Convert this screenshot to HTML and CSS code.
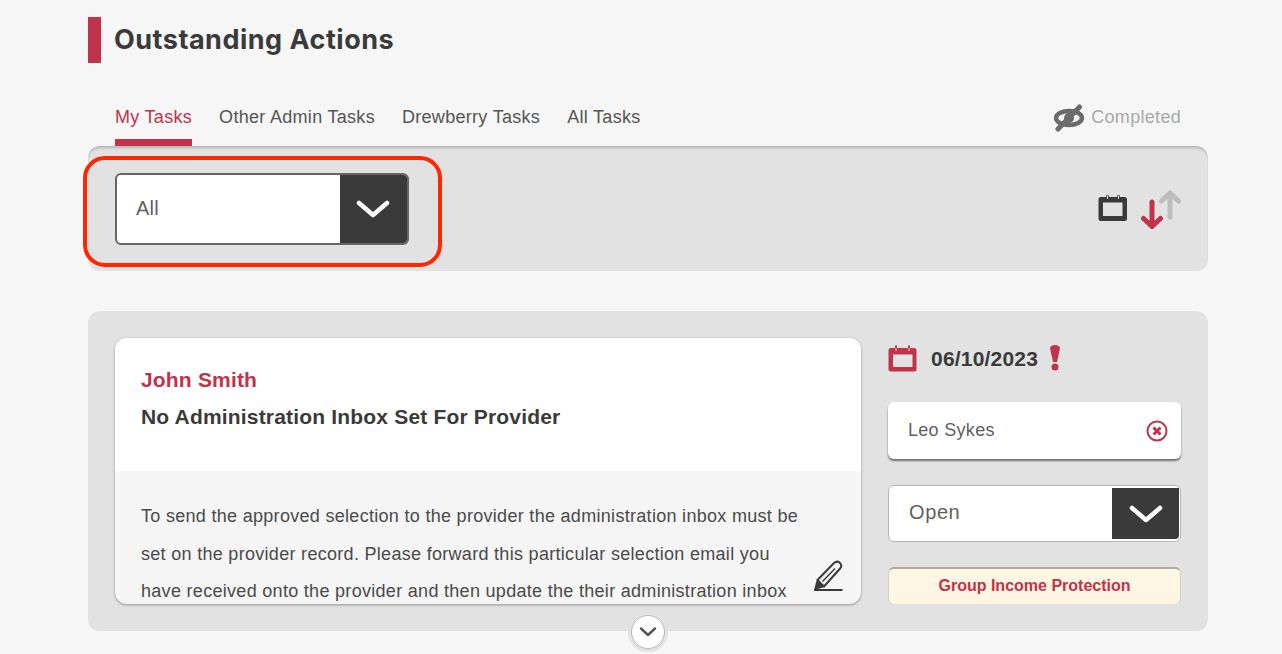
FILE: index.html
```html
<!DOCTYPE html>
<html lang="en">
<head>
    <meta charset="UTF-8">
    <meta name="viewport" content="width=device-width, initial-scale=1.0">
    <title>Outstanding Actions</title>
    <link rel="stylesheet" href="styles.css">
</head>
<body>
    <div class="container">
        <header class="page-title">
            <span class="title-bar"></span>
            <h1>Outstanding Actions</h1>
        </header>

        <nav class="tabs">
            <a class="tab active">My Tasks</a>
            <a class="tab">Other Admin Tasks</a>
            <a class="tab">Drewberry Tasks</a>
            <a class="tab">All Tasks</a>
            <div class="completed">
                <svg class="eye-icon" width="32" height="28" viewBox="0 0 32 28">
                    <ellipse cx="16" cy="14" rx="13" ry="7" fill="none" stroke="#6b6b6b" stroke-width="4.400"/>
                    <circle cx="16" cy="14" r="5" fill="#6b6b6b"/>
                    <path d="M5 25L26.500 3" stroke="#6b6b6b" stroke-width="5" stroke-linecap="round"/>
                </svg>
                <span>Completed</span>
            </div>
        </nav>

        <section class="filter-panel">
            <div class="select select-large">
                <span class="select-value">All</span>
                <span class="select-arrow">
                    <svg width="34" height="20" viewBox="0 0 34 20"><path d="M3 4L17 16L31 4" fill="none" stroke="#fff" stroke-width="4.500" stroke-linecap="round" stroke-linejoin="round"/></svg>
                </span>
            </div>
            <div class="sort-icons">
                <svg class="calendar" width="30" height="26" viewBox="0 0 30 26">
                    <path d="M3 2H26.500A2.500 2.500 0 0 1 29 4.500V23.500A2.500 2.500 0 0 1 26.500 26H3A2.500 2.500 0 0 1 .5 23.500V4.500A2.500 2.500 0 0 1 3 2ZM5 7.500V21H24.500V7.500Z" fill="#3a3a3a" fill-rule="evenodd"/>
                    <path d="M9.500 0V5M20.500 0V5" stroke="#3a3a3a" stroke-width="2.400"/>
                    <path d="M9.500 .5V4M20.500 .5V4" stroke="#e2e2e2" stroke-width="1"/>
                </svg>
                <svg class="arrows" width="40" height="42" viewBox="0 0 40 42">
                    <path d="M29 28V4M20.500 12L29 4L37.500 12" fill="none" stroke="#bdbdbd" stroke-width="5" stroke-linecap="round" stroke-linejoin="round"/>
                    <path d="M11 13V37.500M2.500 29.500L11 37.500L19.500 29.500" fill="none" stroke="#c1334a" stroke-width="5" stroke-linecap="round" stroke-linejoin="round"/>
                </svg>
            </div>
            <div class="highlight-ring"></div>
        </section>

        <section class="task-panel">
            <article class="task-card">
                <div class="task-head">
                    <h2>John Smith</h2>
                    <h3>No Administration Inbox Set For Provider</h3>
                </div>
                <div class="task-body">
                    <p>To send the approved selection to the provider the administration inbox must be set on the provider record. Please forward this particular selection email you have received onto the provider and then update the their administration inbox</p>
                    <svg class="edit-icon" width="30" height="32" viewBox="0 0 30 32">
                        <path d="M1 31H29.500" stroke="#3a3a3a" stroke-width="2"/>
                        <path d="M1 31L4 20L12 28Z" fill="#3a3a3a"/>
                        <path d="M4.500 21L21 4Q24 1.500 26.500 3.500Q29.500 6 27.500 9L11 27.500Z" fill="none" stroke="#3a3a3a" stroke-width="2" stroke-linejoin="round"/>
                        <path d="M9.500 22.500L22 9.500" fill="none" stroke="#3a3a3a" stroke-width="1.400"/>
                    </svg>
                </div>
            </article>

            <aside class="task-side">
                <div class="due-date">
                    <svg width="30" height="27" viewBox="0 0 30 27">
                        <path d="M3 3H26A2.500 2.500 0 0 1 28.500 5.500V24.500A2 2 0 0 1 26.500 26.500H3A2.500 2.500 0 0 1 .5 24.500V5.500A2.500 2.500 0 0 1 3 3ZM5 9.500V22H24.500V9.500Z" fill="#c1334a" fill-rule="evenodd"/>
                        <path d="M8 .5V6M21 .5V6" stroke="#c1334a" stroke-width="2"/>
                        <path d="M8 3V6M21 3V6" stroke="#e2e2e2" stroke-width="1"/>
                    </svg>
                    <span class="date-text">06/10/2023</span>
                    <svg class="alert" width="12" height="26" viewBox="0 0 12 26">
                        <path d="M1 3A5 3 0 0 1 11 3L8 17H4Z" fill="#c1334a"/>
                        <circle cx="6" cy="22" r="3.500" fill="#c1334a"/>
                    </svg>
                </div>
                <div class="assignee">
                    <span>Leo Sykes</span>
                    <svg width="22" height="22" viewBox="0 0 22 22">
                        <circle cx="11" cy="11" r="9.500" fill="none" stroke="#c1334a" stroke-width="2"/>
                        <path d="M7.500 7.500L14.500 14.500M14.500 7.500L7.500 14.500" stroke="#c1334a" stroke-width="3"/>
                    </svg>
                </div>
                <div class="select select-small">
                    <span class="select-value">Open</span>
                    <span class="select-arrow">
                        <svg width="34" height="20" viewBox="0 0 34 20"><path d="M3 4L17 16L31 4" fill="none" stroke="#fff" stroke-width="4.500" stroke-linecap="round" stroke-linejoin="round"/></svg>
                    </span>
                </div>
                <div class="product-tag">Group Income Protection</div>
            </aside>

            <button class="expand-btn">
                <svg width="18" height="10" viewBox="0 0 18 10"><path d="M2 1.500L9 8L16 1.500" fill="none" stroke="#555" stroke-width="2.400" stroke-linecap="round" stroke-linejoin="round"/></svg>
            </button>
        </section>
    </div>
</body>
</html>
```

FILE: styles.css
```css
html, body {
    height: 100%;
}
body {
    font-family: "Liberation Sans", Arial, sans-serif;
    margin: 0;
    background-color: #f6f6f6;
    color: #3a3a3a;
    overflow: hidden;
}
.container {
    width: 1120px;
    margin-left: 88px;
    padding-top: 17px;
}
.page-title {
    display: flex;
    align-items: center;
    gap: 13px;
    height: 46px;
}
.title-bar {
    width: 13px;
    height: 46px;
    background: #c1334a;
}
h1 {
    margin: 0 0 2px;
    font-family: Inter, sans-serif;
    font-size: 27px;
    font-weight: 700;
    letter-spacing: 0.5px;
    color: #3a3a3a;
}
.tabs {
    display: flex;
    gap: 27px;
    height: 83px;
    padding: 0 27px;
    box-sizing: border-box;
    align-items: flex-end;
}
.tab {
    height: 40px;
    font-size: 18px;
    line-height: 22px;
    letter-spacing: 0.3px;
    color: #555;
    box-sizing: border-box;
}
.tab.active {
    color: #c1334a;
    border-bottom: 7px solid #c1334a;
}
.completed {
    display: flex;
    align-items: center;
    gap: 6px;
    margin-left: auto;
    height: 40px;
    padding-bottom: 17px;
    box-sizing: border-box;
    font-size: 18px;
    letter-spacing: 0.3px;
    color: #a8a8a8;
}
.filter-panel {
    position: relative;
    display: flex;
    justify-content: space-between;
    height: 125px;
    padding: 27px 27px 0;
    box-sizing: border-box;
    background: #e2e2e2;
    border-radius: 12px;
    box-shadow: inset 0 3px 3px -1px rgba(0, 0, 0, 0.2);
}
.select {
    display: flex;
    background: #fff;
    box-sizing: border-box;
    overflow: hidden;
    color: #5f5f5f;
}
.select-value {
    flex: 1;
}
.select-arrow {
    display: flex;
    align-items: center;
    justify-content: center;
    background: #3a3a3a;
}
.select-large {
    width: 294px;
    height: 72px;
    border: 2px solid #666;
    border-radius: 6px;
}
.select-large .select-value {
    padding-left: 19px;
    font-size: 20px;
    letter-spacing: 0.2px;
    line-height: 66px;
}
.select-large .select-arrow {
    width: 67px;
    padding-right: 2px;
    box-sizing: border-box;
}
.sort-icons {
    display: flex;
    gap: 13px;
    margin-top: 16px;
}
.sort-icons .calendar {
    margin-top: 6px;
}
.highlight-ring {
    position: absolute;
    left: -5px;
    top: 10px;
    width: 359px;
    height: 111px;
    box-sizing: border-box;
    border: 4px solid #ff2600;
    border-radius: 22px;
}
.task-panel {
    position: relative;
    display: flex;
    gap: 27px;
    height: 320px;
    margin-top: 40px;
    padding: 27px 27px 0;
    box-sizing: border-box;
    background: #e2e2e2;
    border-radius: 12px;
}
.task-card {
    width: 746px;
    height: 266px;
    background: #f5f5f5;
    border-radius: 12px;
    overflow: hidden;
    box-shadow: 0 1px 3px rgba(0, 0, 0, 0.35);
}
.task-head {
    height: 133px;
    padding: 30px 26px 0;
    box-sizing: border-box;
    background: #fff;
}
.task-head h2 {
    margin: 0;
    font-size: 21px;
    line-height: 24px;
    letter-spacing: 0.18px;
    color: #c1334a;
}
.task-head h3 {
    margin: 13px 0 0;
    font-size: 21px;
    line-height: 24px;
    letter-spacing: 0.18px;
    color: #3a3a3a;
}
.task-body {
    position: relative;
    padding: 27px 26px 0;
}
.task-body p {
    margin: 0;
    width: 670px;
    font-size: 18px;
    line-height: 37.500px;
    letter-spacing: 0.3px;
    color: #4a4a4a;
}
.edit-icon {
    position: absolute;
    right: 18px;
    top: 88px;
}
.task-side {
    width: 293px;
}
.due-date {
    display: flex;
    align-items: center;
    height: 40px;
}
.date-text {
    margin-left: 13px;
    padding-top: 2px;
    font-size: 21px;
    font-weight: bold;
    letter-spacing: 0.2px;
    color: #3a3a3a;
}
.alert {
    margin-left: 11px;
}
.assignee {
    display: flex;
    align-items: center;
    justify-content: space-between;
    height: 57px;
    margin-top: 24px;
    padding: 0 13px 0 20px;
    box-sizing: border-box;
    background: #fff;
    border-radius: 6px;
    box-shadow: 0 2px 2px rgba(0, 0, 0, 0.5);
    font-size: 18px;
    letter-spacing: 0.3px;
    color: #5f5f5f;
}
.select-small {
    width: 293px;
    height: 57px;
    margin-top: 26px;
    border: 1px solid #b5b5b5;
    border-radius: 6px;
    padding: 2px 1px 2px 0;
}
.select-small .select-value {
    padding-left: 20px;
    font-size: 20px;
    letter-spacing: 0.6px;
    line-height: 49px;
}
.select-small .select-arrow {
    width: 67px;
    border-radius: 0 0 4px 0;
}
.product-tag {
    height: 37px;
    margin-top: 25px;
    background: #fef5e2;
    border: 1px solid #d4cfc0;
    border-top: 2px solid #b0aa9c;
    border-bottom: 0;
    border-radius: 6px;
    box-sizing: border-box;
    text-align: center;
    font-size: 16px;
    font-weight: bold;
    line-height: 33px;
    color: #c1334a;
}
.expand-btn {
    position: absolute;
    left: 543px;
    top: 304px;
    display: flex;
    align-items: center;
    justify-content: center;
    width: 34px;
    height: 34px;
    padding: 0;
    background: #fff;
    border: 1px solid #bbb;
    border-radius: 50%;
    box-shadow: 0 0 0 3px #e2e2e2;
}
```
